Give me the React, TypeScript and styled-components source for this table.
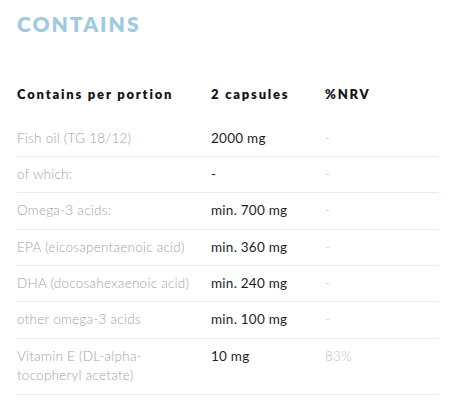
import React from "react";
import styled, { createGlobalStyle } from "styled-components";

const Global = createGlobalStyle`
  html, body { margin: 0; padding: 0; background: #fff; }
  body { font-family: Lato, "Open Sans", sans-serif; }
`;

const Page = styled.div`
  padding: 11px 15px 0 17px;
`;

const Title = styled.h2`
  margin: 0;
  font-family: Lato, sans-serif;
  font-weight: 800;
  font-size: 21px;
  line-height: 26px;
  letter-spacing: 2px;
  color: #9ecae2;
`;

const Table = styled.div`
  margin-top: 47px;
  display: grid;
  grid-template-columns: 194px 114px 1fr;
`;

const HeadCell = styled.div`
  font-weight: 800;
  font-size: 13px;
  line-height: 20px;
  letter-spacing: 1.8px;
  color: #151515;
  padding-bottom: 16.6px;
`;

type Kind = "label" | "value" | "nrv";

const Cell = styled.div<{ $kind: Kind }>`
  font-size: 13.5px;
  line-height: 19.5px;
  letter-spacing: 0.25px;
  padding: 7.95px 0;
  border-bottom: 1px solid #e2eef4;
  font-weight: ${(p) => (p.$kind === "value" ? 400 : 300)};
  color: ${(p) => (p.$kind === "label" ? "#a3a3a3" : p.$kind === "value" ? "#1e1e1e" : "#c0c0c0")};
  padding-right: ${(p) => (p.$kind === "label" ? "6px" : "0")};
`;

const rows: [string, string, string][] = [
  ["Fish oil (TG 18/12)", "2000 mg", "-"],
  ["of which:", "-", "-"],
  ["Omega-3 acids:", "min. 700 mg", "-"],
  ["EPA (eicosapentaenoic acid)", "min. 360 mg", "-"],
  ["DHA (docosahexaenoic acid)", "min. 240 mg", "-"],
  ["other omega-3 acids", "min. 100 mg", "-"],
  ["Vitamin E (DL-alpha-tocopheryl acetate)", "10 mg", "83%"],
];

export default function App() {
  return (
    <Page>
      <Global />
      <Title>CONTAINS</Title>
      <Table>
        <HeadCell>Contains per portion</HeadCell>
        <HeadCell>2 capsules</HeadCell>
        <HeadCell>%NRV</HeadCell>
        {rows.map((r, i) => (
          <React.Fragment key={i}>
            <Cell $kind="label">{r[0]}</Cell>
            <Cell $kind="value">{r[1]}</Cell>
            <Cell $kind="nrv">{r[2]}</Cell>
          </React.Fragment>
        ))}
      </Table>
    </Page>
  );
}
